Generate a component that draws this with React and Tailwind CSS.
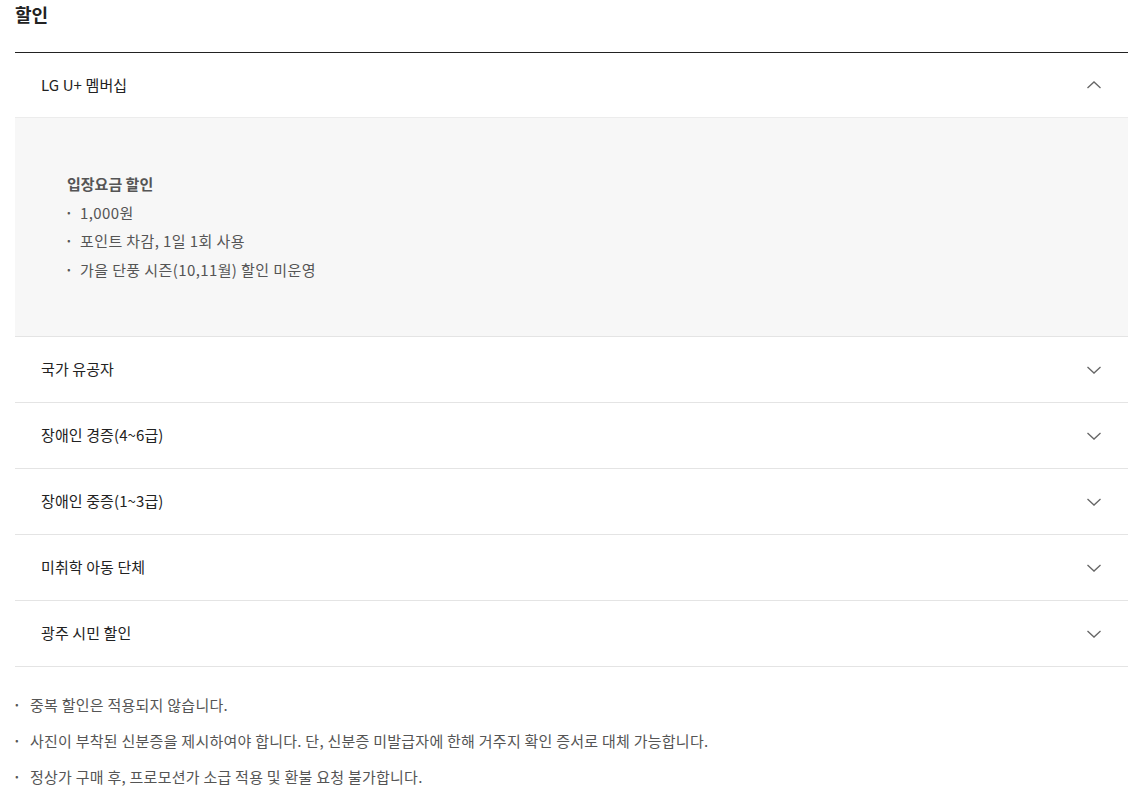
import React, { useState } from 'react';

const FONT = { fontFamily: '"Noto Sans CJK KR", "Noto Sans", sans-serif' };

const items = [
  {
    title: 'LG U+ 멤버십',
    body: {
      heading: '입장요금 할인',
      lines: ['1,000원', '포인트 차감, 1일 1회 사용', '가을 단풍 시즌(10,11월) 할인 미운영'],
    },
  },
  { title: '국가 유공자' },
  { title: '장애인 경증(4~6급)' },
  { title: '장애인 중증(1~3급)' },
  { title: '미취학 아동 단체' },
  { title: '광주 시민 할인' },
];

const notes = [
  '중복 할인은 적용되지 않습니다.',
  '사진이 부착된 신분증을 제시하여야 합니다. 단, 신분증 미발급자에 한해 거주지 확인 증서로 대체 가능합니다.',
  '정상가 구매 후, 프로모션가 소급 적용 및 환불 요청 불가합니다.',
];

// thin chevron, points down when closed
const Chevron = ({ open }) => (
  <svg width="16" height="10" viewBox="0 0 16 10" className={open ? 'rotate-180' : ''}>
    <path d="M1.5 2 L8 8 L14.5 2" fill="none" stroke="#666" strokeWidth="1.3" />
  </svg>
);

export default function App() {
  const [openIdx, setOpenIdx] = useState(0);

  return (
    <div className="bg-white min-h-screen pl-[15px] text-[#222]" style={FONT}>
      <h2 className="text-[18px] font-bold leading-[28px] mb-[24px]">할인</h2>

      <div className="border-t border-[#222]">
        {items.map((item, i) => {
          const open = openIdx === i;
          return (
            <div key={item.title} className="border-b border-[#e4e4e4]">
              <button
                onClick={() => setOpenIdx(open ? -1 : i)}
                className={`w-full flex items-center justify-between pl-[26px] pr-[26px] text-left ${i === 0 ? 'h-[64px]' : 'h-[65px]'}`}
              >
                <span className="text-[15px] tracking-[0.1px]">{item.title}</span>
                <Chevron open={open} />
              </button>
              {open && item.body && (
                <div className="bg-[#f7f7f7] border-t border-[#ececec] pl-[52px] pt-[52px] pb-[52px] text-[15px] leading-[28.5px] text-[#555]">
                  <p className="font-bold">{item.body.heading}</p>
                  {item.body.lines.map((l) => (
                    <p key={l} className="flex">
                      <span className="ml-[-2px] w-[15px] text-[13px] font-bold">·</span>
                      <span className="tracking-[0.4px]">{l}</span>
                    </p>
                  ))}
                </div>
              )}
            </div>
          );
        })}
      </div>

      <ul className="mt-[20px] text-[15px] leading-[36px] text-[#555]">
        {notes.map((n) => (
          <li key={n} className="flex">
            <span className="ml-[-2px] w-[17px] text-[13px] font-bold">·</span>
            <span className="tracking-[0.25px]">{n}</span>
          </li>
        ))}
      </ul>
    </div>
  );
}
